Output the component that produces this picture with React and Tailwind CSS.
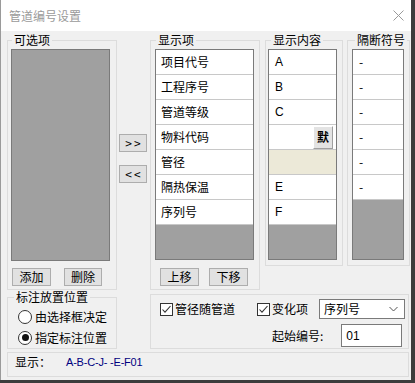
import React from "react";

const font = "font-['Noto_Sans_CJK_SC','Microsoft_YaHei',sans-serif]";

const items = ["项目代号", "工程序号", "管道等级", "物料代码", "管径", "隔热保温", "序列号"];
const contents = ["A", "B", "C", "btn", "beige", "E", "F"];
const seps = ["-", "-", "-", "-", "-", "-"];

function Btn({ children, className = "" }) {
  return (
    <button className={`h-[18px] border border-[#adadad] bg-[#e1e1e1] text-[12px] leading-none text-black flex items-center justify-center ${className}`}>
      {children}
    </button>
  );
}

function Legend({ children, className = "" }) {
  return <legend className={`px-[2px] text-[12px] leading-[18px] text-black ${className}`}>{children}</legend>;
}

function Check() {
  return (
    <span className="w-[13px] h-[13px] border border-[#333] bg-white flex items-center justify-center">
      <svg width="11" height="11" viewBox="0 0 11 11">
        <path d="M1.5 5.5 L4 8.2 L9.5 2" fill="none" stroke="#333" strokeWidth="1.1" />
      </svg>
    </span>
  );
}

function Radio({ on }) {
  return (
    <span className="w-[14px] h-[14px] rounded-full border border-[#333] bg-white flex items-center justify-center">
      {on && <span className="w-[7px] h-[7px] rounded-full bg-[#111]" />}
    </span>
  );
}

export default function App() {
  return (
    <div className={`w-[415px] h-[383px] bg-[#3c3c3c] ${font}`}>
      <div className="w-[411px] h-[380px] bg-[#f0f0f0] border-l border-[#9a9a9a] flex flex-col">
        {/* title bar */}
        <div className="h-[31px] bg-white flex items-center">
          <span className="pl-[8px] text-[12px] text-[#9a9a9a]">管道编号设置</span>
          <svg className="ml-auto mr-[7px]" width="11" height="11" viewBox="0 0 11 11">
            <path d="M0.5 0.5 L10.5 10.5 M10.5 0.5 L0.5 10.5" stroke="#9a9a9a" strokeWidth="1" />
          </svg>
        </div>

        {/* top section */}
        <div className="flex items-start">
          <fieldset className="ml-[6px] w-[110px] h-[259px] border border-[#dcdcdc]">
            <Legend className="ml-[4px]">可选项</Legend>
            <div className="ml-[3px] w-[99px] h-[212px] border border-[#7a7a7a] bg-[#a0a0a0]" />
            <div className="flex mt-[7px]">
              <Btn className="ml-[4px] w-[39px]">添加</Btn>
              <Btn className="ml-[13px] w-[38px]">删除</Btn>
            </div>
          </fieldset>

          <div className="w-[33px] flex flex-col pt-[103px]">
            <Btn className="ml-[2px] w-[28px] tracking-[2px] pl-[2px]">&gt;&gt;</Btn>
            <Btn className="ml-[2px] w-[28px] mt-[13px] tracking-[2px] pl-[2px]">&lt;&lt;</Btn>
          </div>

          <fieldset className="w-[110px] h-[259px] border border-[#dcdcdc]">
            <Legend className="ml-[5px]">显示项</Legend>
            <div className="ml-[4px] w-[99px] h-[211px] border border-[#7a7a7a] bg-[#a0a0a0]">
              {items.map((t) => (
                <div key={t} className="h-[25px] bg-white border-b border-[#c8c8c8] pl-[5px] text-[12px] leading-[24px] text-black">
                  {t}
                </div>
              ))}
            </div>
            <div className="flex mt-[8px]">
              <Btn className="ml-[9px] w-[39px]">上移</Btn>
              <Btn className="ml-[10px] w-[39px]">下移</Btn>
            </div>
          </fieldset>

          <fieldset className="ml-[5px] w-[78px] h-[235px] border border-[#dcdcdc]">
            <Legend className="ml-[5px]">显示内容</Legend>
            <div className="ml-[2px] w-[69px] h-[211px] border border-[#7a7a7a] bg-[#a0a0a0]">
              {contents.map((c, i) => (
                <div
                  key={i}
                  className={`h-[25px] flex items-center border-b border-[#c8c8c8] pl-[6px] text-[12px] text-black font-['Liberation_Sans',sans-serif] ${c === "beige" ? "bg-[#ece9d8]" : "bg-white"}`}
                >
                  {c === "btn" ? (
                    <span className={`ml-auto mr-[3px] w-[20px] h-[23px] border border-[#a0a0a0] border-t-white border-l-white bg-[#e3e3e3] flex items-center justify-center text-[12px] font-bold ${font}`}>
                      默
                    </span>
                  ) : c === "beige" ? null : (
                    c
                  )}
                </div>
              ))}
            </div>
          </fieldset>

          <fieldset className="ml-[4px] w-[63px] h-[235px] border border-[#dcdcdc]">
            <Legend className="ml-[7px]">隔断符号</Legend>
            <div className="ml-[4px] w-[52px] h-[211px] border border-[#7a7a7a] bg-[#a0a0a0]">
              {seps.map((s, i) => (
                <div key={i} className="h-[25px] bg-white border-b border-[#c8c8c8] pl-[6px] text-[12px] leading-[24px] text-black">
                  {s}
                </div>
              ))}
            </div>
          </fieldset>
        </div>

        {/* lower section */}
        <div className="flex items-start">
          <fieldset className="ml-[6px] w-[110px] h-[59px] border border-[#dcdcdc]">
            <legend className="ml-[6px] px-[2px] text-[12px] leading-[14px] text-black">标注放置位置</legend>
            <div className="mt-[2px] h-[21px] flex items-center">
              <span className="ml-[10px]"><Radio /></span>
              <span className="ml-[3px] text-[12px] text-black">由选择框决定</span>
            </div>
            <div className="h-[21px] flex items-center">
              <span className="ml-[10px]"><Radio on /></span>
              <span className="ml-[3px] text-[12px] text-black">指定标注位置</span>
            </div>
          </fieldset>

          <fieldset className="ml-[33px] mt-[4px] w-[259px] h-[55px] border border-[#dcdcdc]">
            <div className="mt-[4px] h-[20px] flex items-center">
              <span className="ml-[9px]"><Check /></span>
              <span className="ml-[2px] text-[12px] text-black">管径随管道</span>
              <span className="ml-[22px]"><Check /></span>
              <span className="ml-[2px] text-[12px] text-black">变化项</span>
              <div className="ml-[11px] w-[86px] h-[20px] border border-[#7a7a7a] bg-white flex items-center pl-[4px] text-[12px] text-black">
                序列号
                <svg className="ml-auto mr-[6px]" width="9" height="6" viewBox="0 0 9 6">
                  <path d="M0.5 1 L4.5 5 L8.5 1" fill="none" stroke="#555" strokeWidth="1" />
                </svg>
              </div>
            </div>
            <div className="mt-[5px] h-[23px] flex items-center">
              <span className="ml-[121px] text-[12px] text-black">起始编号:</span>
              <div className="ml-[18px] w-[61px] h-[23px] border border-[#7a7a7a] bg-white flex items-center pl-[4px] text-[12px] text-black font-['Liberation_Sans',sans-serif]">
                01
              </div>
            </div>
          </fieldset>
        </div>

        <fieldset className="mt-[3px] ml-[6px] w-[402px] h-[25px] border border-[#dcdcdc] flex items-center">
          <span className="ml-[7px] text-[12px] text-black">显示：</span>
          <span className="ml-[15px] text-[11px] tracking-[-0.2px] text-[#000080] font-['Liberation_Sans',sans-serif]">A-B-C-J- -E-F01</span>
        </fieldset>
      </div>
    </div>
  );
}
